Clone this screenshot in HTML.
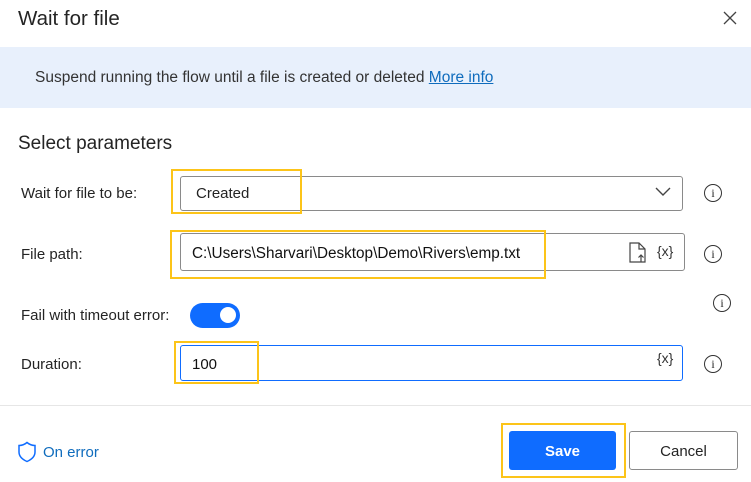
<!DOCTYPE html>
<html><head><style>
*{box-sizing:border-box;margin:0;padding:0}
body{width:751px;height:482px;background:#fff;font-family:"Liberation Sans",sans-serif;color:#242424;position:relative;overflow:hidden;font-size:14px}
.a{position:absolute}
.inp{position:absolute;border:1px solid #8a8a8a;border-radius:3px;background:#fff}
.yb{position:absolute;border:2.5px solid #fcc419}
.info{position:absolute;width:18px;height:18px;border:1.4px solid #333;border-radius:50%;font-size:12px;text-align:center;line-height:16px;font-family:"Liberation Serif",serif}
.lbl{position:absolute;left:21px;font-size:15px}
.fx{position:absolute;font-size:14px;color:#333}
</style></head><body>
<div class="a" style="left:18px;top:7px;font-size:20.5px">Wait for file</div>
<svg class="a" style="left:723px;top:11px" width="14" height="14"><path d="M1 1L13 13M13 1L1 13" stroke="#444" stroke-width="1.3"/></svg>
<div class="a" style="left:0;top:47px;width:751px;height:61px;background:#e8f0fc"></div>
<div class="a" style="left:35px;top:69px;font-size:15.5px;color:#333">Suspend running the flow until a file is created or deleted <span style="color:#0f6cbd;text-decoration:underline">More info</span></div>
<div class="a" style="left:18px;top:133px;font-size:19px">Select parameters</div>

<div class="lbl" style="top:185px">Wait for file to be:</div>
<div class="inp" style="left:180px;top:176px;width:503px;height:35px"></div>
<div class="a" style="left:196px;top:185px;font-size:15px">Created</div>
<svg class="a" style="left:655px;top:187px" width="16" height="10"><path d="M1 1L8 8L15 1" stroke="#444" stroke-width="1.4" fill="none"/></svg>
<div class="yb" style="left:171px;top:169px;width:131px;height:45px"></div>
<div class="info" style="left:704px;top:184px">i</div>

<div class="lbl" style="top:246px">File path:</div>
<div class="inp" style="left:180px;top:233px;width:505px;height:38px"></div>
<div class="a" style="left:192px;top:245px;font-size:15.3px;color:#111">C:\Users\Sharvari\Desktop\Demo\Rivers\emp.txt</div>
<svg class="a" style="left:628px;top:242px" width="20" height="22"><path d="M2 1H11L17 7V20H2Z M11 1V7H17 M13 20V13 M10.5 15.5L13 13L15.5 15.5" stroke="#444" stroke-width="1.2" fill="none"/></svg>
<div class="fx" style="left:657px;top:243px">{x}</div>
<div class="yb" style="left:170px;top:230px;width:376px;height:49px"></div>
<div class="info" style="left:704px;top:245px">i</div>

<div class="lbl" style="top:307px">Fail with timeout error:</div>
<div class="a" style="left:190px;top:303px;width:50px;height:25px;border-radius:13px;background:#0f6cff"></div>
<div class="a" style="left:220px;top:307px;width:16px;height:16px;border-radius:50%;background:#fff"></div>
<div class="info" style="left:713px;top:294px">i</div>

<div class="lbl" style="top:356px">Duration:</div>
<div class="inp" style="left:180px;top:345px;width:503px;height:36px;border-color:#0f6cff"></div>
<div class="a" style="left:192px;top:356px;font-size:15px;color:#111">100</div>
<div class="fx" style="left:657px;top:350px">{x}</div>
<div class="yb" style="left:174px;top:341px;width:85px;height:43px"></div>
<div class="info" style="left:704px;top:355px">i</div>

<div class="a" style="left:0;top:405px;width:751px;height:1px;background:#e6e6e6"></div>
<svg class="a" style="left:17px;top:441px" width="20" height="22"><path d="M10 1.5C7 4 4.5 4.5 2 4.5V11C2 15.5 5.5 18.5 10 20.5C14.5 18.5 18 15.5 18 11V4.5C15.5 4.5 13 4 10 1.5Z" stroke="#0f6cff" stroke-width="1.5" fill="none"/></svg>
<div class="a" style="left:43px;top:444px;color:#0f6cbd;font-size:15px">On error</div>
<div class="a" style="left:509px;top:431px;width:107px;height:39px;background:#0f6cff;border-radius:3px;color:#fff;font-weight:bold;font-size:15px;text-align:center;line-height:42px">Save</div>
<div class="yb" style="left:501px;top:423px;width:125px;height:55px"></div>
<div class="a" style="left:629px;top:431px;width:109px;height:39px;border:1px solid #8a8a8a;border-radius:3px;font-size:15px;text-align:center;line-height:40px">Cancel</div>
</body></html>
